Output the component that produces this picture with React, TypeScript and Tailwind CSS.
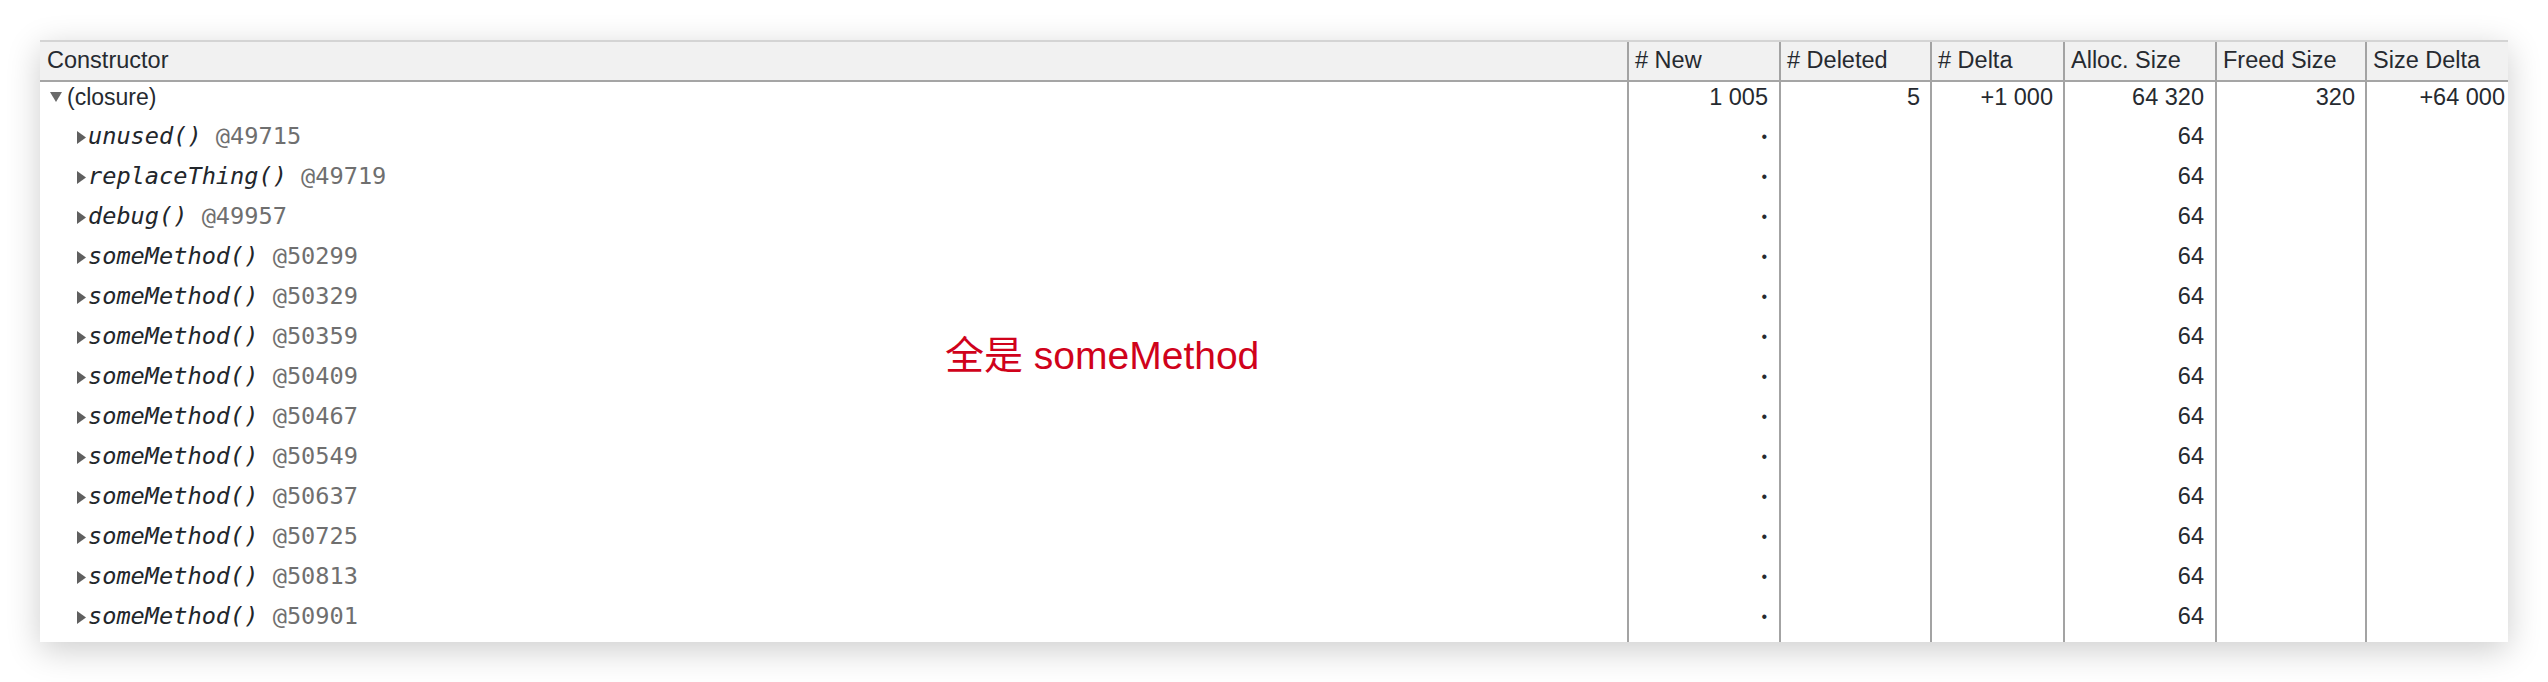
import React from "react";

const cols = "grid grid-cols-[1587px_152px_151px_133px_152px_150px_143px]";
const sans = "font-['Liberation_Sans',Arial,sans-serif]";
const mono = "font-['DejaVu_Sans_Mono',monospace]";

const headers = ["# New", "# Deleted", "# Delta", "Alloc. Size", "Freed Size", "Size Delta"];
const cellPad = ["pr-[11px]", "pr-[10px]", "pr-[10px]", "pr-[11px]", "pr-[10px]", "pr-[3px]"];

const children: [string, string][] = [
  ["unused()", "@49715"],
  ["replaceThing()", "@49719"],
  ["debug()", "@49957"],
  ["someMethod()", "@50299"],
  ["someMethod()", "@50329"],
  ["someMethod()", "@50359"],
  ["someMethod()", "@50409"],
  ["someMethod()", "@50467"],
  ["someMethod()", "@50549"],
  ["someMethod()", "@50637"],
  ["someMethod()", "@50725"],
  ["someMethod()", "@50813"],
  ["someMethod()", "@50901"],
];

function DownTriangle() {
  return (
    <svg width="12" height="10" viewBox="0 0 12 10" className="shrink-0">
      <path d="M0 0 L12 0 L6 10 Z" fill="#6a6a6a" />
    </svg>
  );
}

function RightTriangle() {
  return (
    <svg width="9" height="13" viewBox="0 0 9 13" className="shrink-0">
      <path d="M0 0 L9 6.5 L0 13 Z" fill="#5f5f5f" />
    </svg>
  );
}

function NumCells({ values, className }: { values: React.ReactNode[]; className: string }) {
  return (
    <>
      {values.map((v, i) => (
        <div
          key={i}
          className={`border-l-2 border-[#a3a3a3] flex justify-end ${cellPad[i]} ${className}`}
        >
          {v}
        </div>
      ))}
    </>
  );
}

export default function App() {
  return (
    <div className={`w-full h-[682px] bg-white pt-[40px] pl-[40px] ${sans}`}>
      <div className="relative w-[2468px] bg-white shadow-[0_8px_32px_rgba(0,0,0,0.2)] text-[23.5px] text-[#262a30]">
        {/* header */}
        <div className={`${cols} h-[42px] bg-[#f1f1f1] border-t-2 border-[#d4d4d4] border-b-2 border-b-[#a5a5a5]`}>
          <div className="pl-[7px] flex items-center">Constructor</div>
          {headers.map((h) => (
            <div key={h} className="border-l-2 border-[#a3a3a3] pl-[6px] flex items-center whitespace-nowrap">
              {h}
            </div>
          ))}
        </div>

        {/* closure row */}
        <div className={`${cols} h-[35px] leading-[30px]`}>
          <div className="flex items-center h-[30px] pl-[10px] gap-[5px]">
            <DownTriangle />
            <span className="text-[23px]">(closure)</span>
          </div>
          <NumCells values={["1 005", "5", "+1 000", "64 320", "320", "+64 000"]} className="h-full" />
        </div>

        {/* children */}
        {children.map(([name, id], i) => (
          <div key={i} className={`${cols} h-[40px]`}>
            <div className="flex items-center pl-[37px] gap-[2px]">
              <RightTriangle />
              <span className={`${mono} text-[23.6px] whitespace-pre`}>
                <span className="italic text-[#22262b]">{name}</span>
                <span className="text-[#6f6f6f]"> {id}</span>
              </span>
            </div>
            <NumCells
              values={[<span className="text-[16px] pr-[1px]">•</span>, "", "", "64", "", ""]}
              className="items-center"
            />
          </div>
        ))}

        {/* filler */}
        <div className={`${cols} h-[5px]`}>
          <div />
          <NumCells values={["", "", "", "", "", ""]} className="" />
        </div>

        <div className="absolute left-[905px] top-[296px] leading-none text-[39px] text-[#d0021b] font-['Liberation_Sans','Noto_Sans_CJK_SC',sans-serif] whitespace-nowrap">
          全是 someMethod
        </div>
      </div>
    </div>
  );
}
